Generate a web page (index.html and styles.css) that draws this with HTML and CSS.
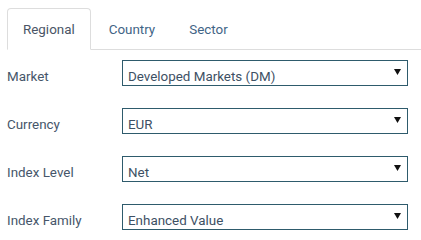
FILE: index.html
```html
<!DOCTYPE html>
<html lang="en">
<head>
	<meta charset="UTF-8">
	<title>Index Selector</title>
	<link rel="stylesheet" href="styles.css">
</head>
<body>

<div class="panel">
	<ul class="tabs">
		<li class="tab active">Regional</li>
		<li class="tab">Country</li>
		<li class="tab">Sector</li>
	</ul>

	<div class="form">
		<div class="row">
			<label class="lbl">Market</label>
			<div class="pick"><span>Developed Markets (DM)</span><svg class="arrow" width="7" height="6" viewBox="0 0 7 6"><path d="M0 0H7L3.5 6Z"/></svg></div>
		</div>
		<div class="row">
			<label class="lbl">Currency</label>
			<div class="pick"><span>EUR</span><svg class="arrow" width="7" height="6" viewBox="0 0 7 6"><path d="M0 0H7L3.5 6Z"/></svg></div>
		</div>
		<div class="row">
			<label class="lbl">Index Level</label>
			<div class="pick"><span>Net</span><svg class="arrow" width="7" height="6" viewBox="0 0 7 6"><path d="M0 0H7L3.5 6Z"/></svg></div>
		</div>
		<div class="row">
			<label class="lbl">Index Family</label>
			<div class="pick"><span>Enhanced Value</span><svg class="arrow" width="7" height="6" viewBox="0 0 7 6"><path d="M0 0H7L3.5 6Z"/></svg></div>
		</div>
	</div>
</div>

</body>
</html>
```

FILE: styles.css
```css
*{
	margin: 0;
	padding: 0;
	box-sizing: border-box;
}

body{
	background: #fff;
	font-family: Roboto, "Liberation Sans", sans-serif;
	font-size: 13.4px;
	color: #46566a;
}

.panel{
	padding: 8px 0 0 7px;
}

/* tabs */
.tabs{
	list-style: none;
	display: flex;
	border-bottom: 1px solid #dddddd;
	height: 42px;
}

.tab{
	height: 42px;
	padding: 13px 15px 0;
	margin-right: 2px;
	border: 1px solid transparent;
	border-radius: 4px 4px 0 0;
	color: #3f6486;
}

.tab.active{
	color: #4a5566;
	border-color: #dddddd;
	border-bottom-color: #fff;
	background: #fff;
	padding-left: 15px;
}

/* form rows */
.form{
	padding-top: 10px;
}

.row{
	display: flex;
	align-items: center;
	height: 26px;
	margin-bottom: 22px;
}

.lbl{
	width: 115px;
	padding-top: 7px;
}

.pick{
	width: 286px;
	height: 26px;
	border: 1px solid #2e5b6c;
	display: flex;
	align-items: center;
	justify-content: space-between;
	padding: 6px 6px 0 5px;
	color: #3d5064;
}

.arrow{
	margin-top: -9px;
	fill: #111;
}
```
